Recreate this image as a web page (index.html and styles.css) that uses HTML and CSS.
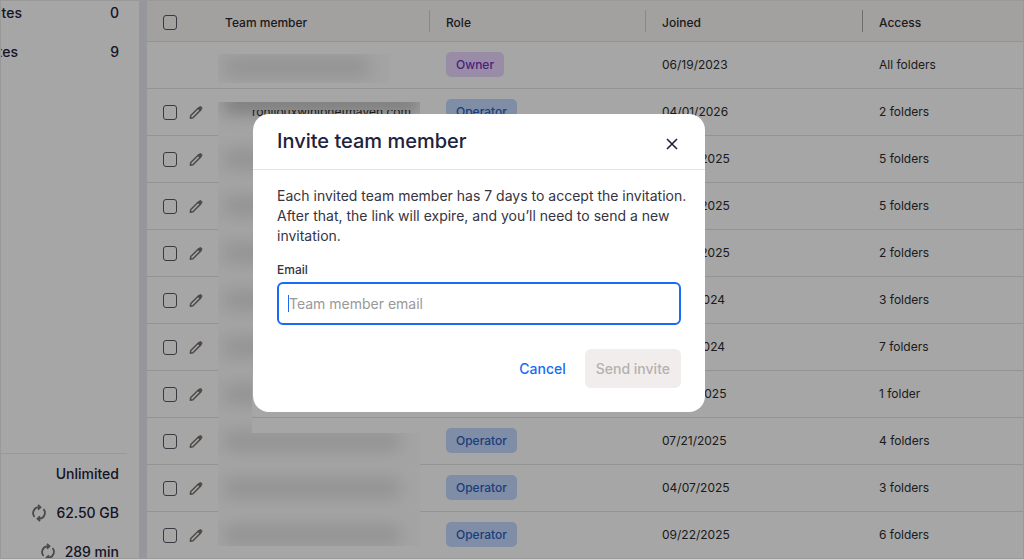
FILE: index.html
```html
<!DOCTYPE html>
<html lang="en">
	<head>
		<meta charset="utf-8">
		<title>Team members</title>
		<link rel="stylesheet" href="styles.css">
	</head>
	<body>
		<svg class="sprite" aria-hidden="true">
			<symbol id="pencil" viewBox="0 0 16 16">
				<path d="M1.500 14.500l.5-3L11 2.500l2.500 2.500L4.500 14z" fill="none" stroke="currentColor" stroke-width="1.700" stroke-linejoin="round"/>
				<path d="M10 3.500L12 1.500a1.800 1.800 0 0 1 2.500 2.500L12.500 6z" fill="currentColor" stroke="currentColor" stroke-linejoin="round"/>
			</symbol>
			<symbol id="refresh" viewBox="0 0 16 18">
				<path d="M3.500 13A6 6 0 0 1 7.500 3.200H9.500M7 .8L9.500 3.200 7 5.600M12.500 5A6 6 0 0 1 8.500 14.800H6.500M9 12.400L6.500 14.800 9 17.200" fill="none" stroke="currentColor" stroke-width="1.800"/>
			</symbol>
		</svg>

		<div class="page">
			<aside class="sidebar">
				<ul class="stats">
					<li><span class="label">Favorites</span><b>0</b></li>
					<li><span class="label short">Websites</span><b>9</b></li>
				</ul>
				<ul class="stats usage">
					<li><b>Unlimited</b></li>
					<li><svg class="refresh"><use href="#refresh"/></svg><b>62.50 GB</b></li>
					<li><svg class="refresh"><use href="#refresh"/></svg><b>289 min</b></li>
				</ul>
			</aside>

			<main class="content">
				<table class="members">
					<thead>
						<tr>
							<th class="tools"><input type="checkbox" aria-label="Select all"></th>
							<th class="member">Team member</th>
							<th class="role">Role</th>
							<th class="joined">Joined</th>
							<th class="access">Access</th>
						</tr>
					</thead>
					<tbody id="rows"></tbody>
				</table>
			</main>
		</div>

		<div class="overlay">
			<form class="modal" role="dialog" aria-labelledby="title">
				<div class="modal-head">
					<h2 id="title">Invite team member</h2>
					<button type="button" class="close" aria-label="Close">
						<svg viewBox="0 0 12 12"><path d="M1 1l10 10M11 1L1 11" fill="none" stroke="currentColor" stroke-width="1.600"/></svg>
					</button>
				</div>
				<div class="modal-body">
					<p>Each invited team member has 7 days to accept the invitation. After that, the link will expire, and you’ll need to send a new invitation.</p>
					<label for="email">Email</label>
					<div class="field">
						<input type="email" id="email" placeholder="Team member email">
						<span class="caret"></span>
					</div>
					<div class="actions">
						<button type="button" class="cancel">Cancel</button>
						<button type="submit" class="send" disabled>Send invite</button>
					</div>
				</div>
			</form>
		</div>

		<script>
			var members = [
				["Owner", "06/19/2023", "All folders"],
				["Operator", "04/01/2026", "2 folders"],
				["Operator", "09/22/2025", "5 folders"],
				["Operator", "09/22/2025", "5 folders"],
				["Operator", "09/22/2025", "2 folders"],
				["Operator", "10/21/2024", "3 folders"],
				["Operator", "10/21/2024", "7 folders"],
				["Operator", "07/21/2025", "1 folder"],
				["Operator", "07/21/2025", "4 folders"],
				["Operator", "04/07/2025", "3 folders"],
				["Operator", "09/22/2025", "6 folders"]
			];
			var html = "";
			for (var i = 0; i < members.length; i++) {
				var m = members[i];
				var tools = "";
				if (m[0] != "Owner") {
					tools = '<div class="tool-list"><input type="checkbox" aria-label="Select member">' +
						'<button class="edit" aria-label="Edit"><svg><use href="#pencil"/></svg></button></div>';
				}
				html += '<tr><td class="tools">' + tools + '</td>' +
					'<td class="member"><div class="hidden-mail"><i></i>' + (i == 1 ? '<span>ronijouxwinipnetmaven.com</span>' : '') + '</div></td>' +
					'<td><span class="tag ' + m[0].toLowerCase() + '">' + m[0] + '</span></td>' +
					'<td>' + m[1] + '</td><td>' + m[2] + '</td></tr>';
			}
			document.getElementById("rows").innerHTML = html;
		</script>
	</body>
</html>
```
FILE: styles.css
```css
* {
	box-sizing: border-box;
	margin: 0;
	padding: 0;
}

body {
	font-family: Inter, "Liberation Sans", sans-serif;
	font-size: 12px;
	color: #2c2c2c;
	background: #fff;
	overflow: hidden;
}

button {
	font-family: inherit;
	border: 0;
	background: none;
	cursor: pointer;
}

ul {
	list-style: none;
}

.sprite {
	display: none;
}

.page {
	display: flex;
	height: 100vh;
	border: 1px solid #ececec;
	overflow: hidden;
}

/* sidebar */
.sidebar {
	flex: none;
	width: 138px;
	padding-right: 12px;
	display: flex;
	flex-direction: column;
}

.stats {
	margin-top: -8px;
}

.stats li {
	display: flex;
	align-items: center;
	justify-content: flex-end;
	height: 39px;
	padding-right: 8px;
	font-size: 14px;
	color: #23213a;
}

.stats b {
	font-weight: 500;
}

.label {
	display: flex;
	justify-content: flex-end;
	width: 21px;
	margin-right: auto;
	font-weight: 500;
	overflow: hidden;
}

.label.short {
	width: 17px;
}

.usage {
	margin-top: auto;
	margin-bottom: -13px;
	border-top: 1px solid #ececec;
}

.refresh {
	width: 16px;
	height: 18px;
	margin-right: 9px;
	color: #76716f;
}

/* table */
.content {
	flex: 1;
	min-width: 0;
	border-left: 8px solid #e6e8f0;
}

.members {
	width: 100%;
	table-layout: fixed;
	border-collapse: separate;
	border-spacing: 0;
}

.members th,
.members td {
	height: 47px;
	padding: 0 16px 2px;
	text-align: left;
	vertical-align: middle;
	border-bottom: 1px solid #e2e2e2;
}

.members th {
	height: 41px;
	padding-top: 2px;
	padding-bottom: 0;
	font-weight: 500;
	background: linear-gradient(#d5d1d1, #d5d1d1) no-repeat right center / 0 22px #faf6f6;
}

.members .member {
	background-size: 1px 22px;
	width: 221px;
}

.members .role {
	background-size: 1px 22px;
	width: 216px;
}

.members .joined {
	background-image: linear-gradient(#aaa, #aaa);
	background-size: 1px 22px;
	width: 217px;
}

.members .tools {
	width: 62px;
	padding-right: 0;
	padding-bottom: 0;
}

.tool-list {
	display: flex;
	align-items: center;
	gap: 12px;
}

.members input {
	display: block;
	appearance: none;
	width: 14px;
	height: 15px;
	border: 1px solid #595763;
	border-radius: 3px;
}

.edit svg {
	display: block;
	width: 14px;
	height: 15px;
	color: #78726d;
}

.tag {
	display: inline-block;
	height: 25px;
	padding: 0 10px;
	line-height: 25px;
	font-weight: 500;
	border-radius: 5px;
}

.owner {
	color: #7332c4;
	background: #ead8ff;
}

.operator {
	color: #2a60bd;
	background: #c5d9ff;
}

/* concealed addresses */
td.member {
	position: relative;
}

.hidden-mail {
	position: absolute;
	left: 9px;
	top: 0;
	width: 202px;
	height: 47px;
	background: #fcfcfc;
	overflow: hidden;
}

.hidden-mail i {
	position: absolute;
	left: 6px;
	right: 20px;
	top: 14px;
	height: 18px;
	background: #dedede;
	filter: blur(9px);
}

.hidden-mail span {
	position: absolute;
	left: 34px;
	top: 2px;
	clip-path: inset(6px 0 0 0);
}

tr:first-child .hidden-mail {
	top: 12px;
	width: 172px;
	height: 29px;
}

tr:first-child .hidden-mail i {
	top: 4px;
}

tr:nth-child(2) .hidden-mail {
	top: 13px;
	height: 34px;
}

tr:nth-child(2) .hidden-mail i {
	top: -8px;
	right: 0;
	background: #b5b5b5;
}

tr:nth-child(8) .hidden-mail {
	width: 34px;
}

tr:nth-child(8) .hidden-mail i {
	right: -20px;
}

tr:nth-child(9) .hidden-mail {
	clip-path: polygon(0 0, 34px 0, 34px 15px, 100% 15px, 100% 100%, 0 100%);
}

tr:last-child .hidden-mail {
	height: 34px;
}

/* modal */
.overlay {
	position: fixed;
	inset: 0;
	display: flex;
	align-items: flex-start;
	justify-content: center;
	padding: 114px 66px 0 0;
	background: rgba(0, 0, 0, .35);
}

.modal {
	width: 452px;
	background: #fff;
	border-radius: 16px;
	color: #36343f;
}

.modal-head {
	display: flex;
	align-items: center;
	justify-content: space-between;
	height: 56px;
	padding: 0 23px 0 24px;
	border-bottom: 1px solid #e4e4e4;
}

.modal-head h2 {
	padding-bottom: 2px;
	font-size: 20px;
	font-weight: 500;
	color: #23213a;
}

.close {
	width: 20px;
	height: 24px;
	padding: 8px 4px 4px;
	color: #23213a;
}

.close svg {
	display: block;
}

.modal-body {
	padding: 16px 24px 24px;
}

.modal-body p {
	margin-right: -16px;
	font-size: 14px;
	line-height: 20px;
}

.modal-body label {
	display: block;
	margin: 16px 0 4px;
	font-size: 12px;
	font-weight: 500;
	line-height: 16px;
}

.field {
	position: relative;
}

.field input {
	display: block;
	width: 100%;
	height: 43px;
	padding: 0 10px;
	font-family: inherit;
	font-size: 14px;
	border: 2px solid #176bf5;
	border-radius: 6px;
	outline: 0;
}

.field input::placeholder {
	color: #999;
}

.caret {
	position: absolute;
	left: 11px;
	top: 13px;
	width: 1px;
	height: 17px;
	background: #176bf5;
}

.actions {
	display: flex;
	justify-content: flex-end;
	gap: 8px;
	margin-top: 24px;
}

.actions button {
	height: 39px;
	padding: 0 11px;
	font-size: 14px;
	font-weight: 500;
	border-radius: 6px;
}

.cancel {
	color: #176bf5;
}

.send {
	color: #b5b1b0;
	background: #f1edec;
}
```
